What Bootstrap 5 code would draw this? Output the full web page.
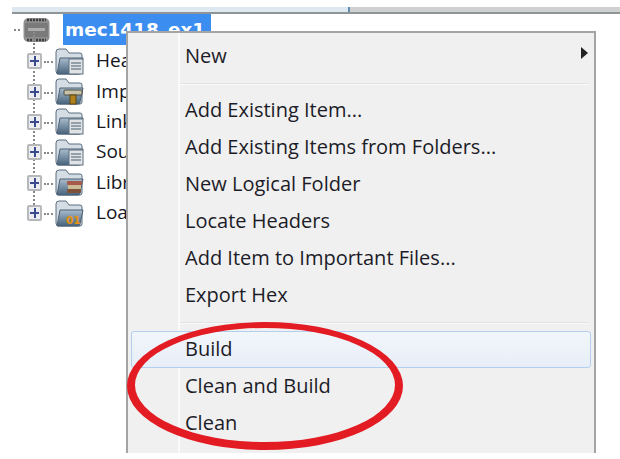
<!DOCTYPE html>
<html lang="en">
<head>
  <meta charset="UTF-8">
  <title>Project context menu</title>
  <link href="https://cdn.jsdelivr.net/npm/bootstrap@5.3.0/dist/css/bootstrap.min.css" rel="stylesheet">
  <style>
    body {
      background: #fff;
      overflow: hidden;
      font-family: "Open Sans", "Liberation Sans", sans-serif;
      color: #1c1c28;
    }
    .stage { position: relative; width: 620px; height: 459px; overflow: hidden; padding-top: 7px; }
    .tool-strip { margin-left: 12px; height: 7px; display: flex; border-bottom: 2px solid #8f9497; }
    .tool-left { width: 338px; background: #dde8f1; border-right: 2px solid #5f8db0; }
    .tool-right { flex: 1; background: #d0d0d0; }

    .tree-root { margin: 0 0 1px 14px; height: 31px; }
    .tree-dots { width: 6px; margin-right: 3px; border-top: 2px dotted #888; }
    .root-label {
      background: #3b8df0; color: #fff; font-family: "DejaVu Sans", sans-serif; font-weight: 700;
      font-size: 18.4px; line-height: 31px; height: 31px; padding: 0 2px; margin-left: 13px; width: 148px;
      white-space: nowrap;
    }
    .tree-items { margin-left: 27px; position: relative; }
    .tree-items::before {
      content: ""; position: absolute; left: 6px; top: -14px; bottom: 15px; border-left: 2px dotted #888;
    }
    .tree-row { height: 30.4px; position: relative; }
    .tree-label { font-size: 19px; line-height: 26px; margin-left: 12px; margin-bottom: 2px; white-space: nowrap; color: #16161e; }
    .tree-dash { width: 13px; height: 0; padding: 0 2px; }
    .tree-dash::before { content: ""; display: block; border-top: 2px dotted #888; }
    .plus-box {
      width: 15px; height: 16px; border: 2px solid #b6b8ba; border-radius: 2px; background: #eceef2;
      position: relative; flex: none;
    }
    .plus-box::before, .plus-box::after { content: ""; position: absolute; background: #3a4a8c; }
    .plus-box::before { left: 1px; right: 1px; top: 5px; height: 2px; }
    .plus-box::after { top: 1px; bottom: 1px; left: 4.5px; width: 2px; }

    .ctx-menu {
      position: absolute; left: 126px; top: 31px; width: 470px; height: 422px;
      background: #f0f0f0; border: 2px solid #a4a4a4; border-bottom: 0;
      display: flex; flex-direction: column;
    }
    .ctx-menu::before {
      content: ""; position: absolute; left: 50px; top: 0; bottom: 0; width: 2px; background: #fafafa;
    }
    .ctx-item {
      height: 37px; padding-left: 57px; font-size: 20px; line-height: 36px;
      position: relative; white-space: nowrap; flex: none;
    }
    .ctx-item.hovered { margin: 0 3px; padding-left: 53px; line-height: 34px;
      border: 1px solid #b2cff0; border-radius: 3px; background: linear-gradient(#f1f6fb, #e8eef7); }
    .ctx-arrow {
      position: absolute; right: 6px; top: 9px; width: 0; height: 0;
      border-left: 7px solid #222; border-top: 6px solid transparent; border-bottom: 6px solid transparent;
    }
    .ctx-sep { height: 2px; margin: 8px 6px 7px 52px; background: #fafafa; border-top: 1px solid #e2e2e2; flex: none; }
    .ctx-top { height: 5px; flex: none; }
    .ring { position: absolute; left: 0; top: 0; pointer-events: none; }
  </style>
</head>
<body>
  <div class="stage">
    <div class="tool-strip"><div class="tool-left"></div><div class="tool-right"></div></div>

    <!-- дерево проекта -->
    <div class="tree-root d-flex align-items-center">
      <div class="tree-dots"></div>
      <svg width="27" height="26" viewBox="0 0 27 26">
        <rect x="0.5" y="1" width="26" height="24" rx="5" fill="#8f8f8f"/>
        <path d="M4 3h19M4 23h19" stroke="#3e3e3e" stroke-width="2.5" stroke-dasharray="2 1"/>
        <rect x="2" y="6" width="23" height="14" rx="1" fill="#7a7a7a"/>
        <rect x="5" y="11" width="17" height="3" fill="#adadad"/>
      </svg>
      <div class="root-label">mec1418_ex1</div>
    </div>

    <div class="tree-items">
      <div class="tree-row d-flex align-items-center">
        <div class="plus-box"></div><div class="tree-dash"></div>
        <svg width="29" height="27" viewBox="0 0 29 27"><use href="#folder"/><rect x="14" y="11" width="14" height="15" fill="#dfe3e6" stroke="#5f7080"/><path d="M16 15h10M16 18h10M16 21h10" stroke="#7c8a96" stroke-width="1.5"/></svg>
        <div class="tree-label">Hea</div>
      </div>
      <div class="tree-row d-flex align-items-center">
        <div class="plus-box"></div><div class="tree-dash"></div>
        <svg width="29" height="27" viewBox="0 0 29 27"><use href="#folder"/><rect x="9" y="12" width="18" height="5" rx="1" fill="#c8c2a8" stroke="#4c4c44"/><rect x="15" y="17" width="6" height="9" fill="#b0811c" stroke="#5c4a10"/></svg>
        <div class="tree-label">Imp</div>
      </div>
      <div class="tree-row d-flex align-items-center">
        <div class="plus-box"></div><div class="tree-dash"></div>
        <svg width="29" height="27" viewBox="0 0 29 27"><use href="#folder"/><rect x="14" y="11" width="14" height="15" fill="#dfe3e6" stroke="#5f7080"/><path d="M16 15h10M16 18h10M16 21h10" stroke="#7c8a96" stroke-width="1.5"/></svg>
        <div class="tree-label">Link</div>
      </div>
      <div class="tree-row d-flex align-items-center">
        <div class="plus-box"></div><div class="tree-dash"></div>
        <svg width="29" height="27" viewBox="0 0 29 27"><use href="#folder"/><rect x="14" y="11" width="14" height="15" fill="#dfe3e6" stroke="#5f7080"/><path d="M16 15h10M16 18h10M16 21h10" stroke="#7c8a96" stroke-width="1.5"/></svg>
        <div class="tree-label">Sou</div>
      </div>
      <div class="tree-row d-flex align-items-center">
        <div class="plus-box"></div><div class="tree-dash"></div>
        <svg width="29" height="27" viewBox="0 0 29 27"><use href="#folder"/><rect x="12" y="12" width="15" height="4" rx="1" fill="#a85a4a"/><rect x="13" y="16" width="13" height="4" fill="#cdbb95"/><rect x="12" y="20" width="14" height="4" rx="1" fill="#7d5238"/></svg>
        <div class="tree-label">Libr</div>
      </div>
      <div class="tree-row d-flex align-items-center">
        <div class="plus-box"></div><div class="tree-dash"></div>
        <svg width="29" height="27" viewBox="0 0 29 27"><use href="#folder"/><text x="11" y="24" font-family="DejaVu Sans" font-weight="700" font-size="10.5" fill="#e8920f">01</text></svg>
        <div class="tree-label">Loa</div>
      </div>
    </div>

    <!-- общая форма папки -->
    <svg width="0" height="0" class="position-absolute">
      <defs>
        <linearGradient id="folderFill" x1="0" y1="0" x2="0" y2="1">
          <stop offset="0" stop-color="#a9bdcc"/><stop offset="1" stop-color="#47637c"/>
        </linearGradient>
        <g id="folder">
          <path d="M1 4q0-3 3-3h7l3 4h11q2 0 2 2v17q0 2-2 2H4q-3 0-3-3z" fill="#d5dde4" stroke="#5b6e80"/>
          <path d="M5 10h23l-3 14q0 2-2 2H2z" fill="url(#folderFill)" stroke="#4c6074"/>
        </g>
      </defs>
    </svg>

    <!-- контекстное меню -->
    <div class="ctx-menu">
      <div class="ctx-top"></div>
      <div class="ctx-item">New<span class="ctx-arrow"></span></div>
      <div class="ctx-sep"></div>
      <div class="ctx-item">Add Existing Item...</div>
      <div class="ctx-item">Add Existing Items from Folders...</div>
      <div class="ctx-item">New Logical Folder</div>
      <div class="ctx-item">Locate Headers</div>
      <div class="ctx-item">Add Item to Important Files...</div>
      <div class="ctx-item">Export Hex</div>
      <div class="ctx-sep"></div>
      <div class="ctx-item hovered">Build</div>
      <div class="ctx-item">Clean and Build</div>
      <div class="ctx-item">Clean</div>
    </div>

    <!-- красное кольцо поверх меню: сверху тоньше, снизу толще -->
    <svg class="ring" width="620" height="459" viewBox="0 0 620 459">
      <path fill="#e31b23" fill-rule="evenodd" d="M127 386a138 64 0 1 0 276 0a138 64 0 1 0 -276 0z M135 385a130 57 0 1 0 260 0a130 57 0 1 0 -260 0z"/>
    </svg>
  </div>
  <script src="https://cdn.jsdelivr.net/npm/bootstrap@5.3.0/dist/js/bootstrap.bundle.min.js"></script>
</body>
</html>
